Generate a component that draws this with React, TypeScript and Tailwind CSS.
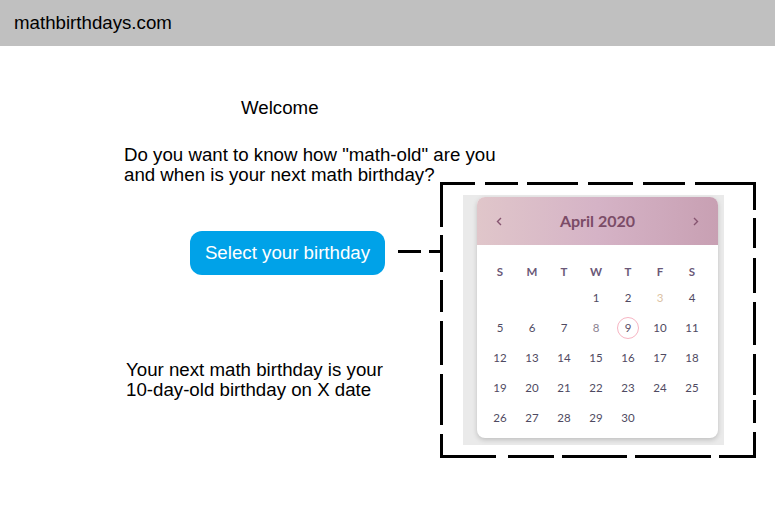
import React from "react";

const arial = { fontFamily: '"Liberation Sans", Arial, sans-serif' };
const lato = { fontFamily: 'Lato, "Open Sans", sans-serif' };

const topDashes: [number, number][] = [[0, 35], [45, 78], [87, 138], [148, 193], [203, 245], [255, 316]];
const rightDashes: [number, number][] = [[0, 28], [36, 66], [76, 111], [120, 163], [172, 213], [218, 241], [250, 276]];
const leftDashes: [number, number][] = [[0, 45], [53, 90], [98, 130], [139, 183], [192, 243], [252, 276]];
const bottomDashes: [number, number][] = [[0, 56], [68, 114], [122, 187], [195, 271], [279, 316]];

function DashedFrame() {
  return (
    <svg className="absolute inset-0 pointer-events-none" width="317" height="277" viewBox="0 0 317 277">
      {topDashes.map(([a, b], i) => (
        <rect key={"t" + i} x={a} y={0} width={b - a} height={3} fill="#000" />
      ))}
      {bottomDashes.map(([a, b], i) => (
        <rect key={"b" + i} x={a} y={273} width={b - a} height={3} fill="#000" />
      ))}
      {leftDashes.map(([a, b], i) => (
        <rect key={"l" + i} x={0} y={a} width={3} height={b - a} fill="#000" />
      ))}
      {rightDashes.map(([a, b], i) => (
        <rect key={"r" + i} x={313} y={a} width={3} height={b - a} fill="#000" />
      ))}
    </svg>
  );
}

const weekdays = ["S", "M", "T", "W", "T", "F", "S"];
const cells: (number | null)[] = [null, null, null, ...Array.from({ length: 30 }, (_, i) => i + 1)];

function Calendar() {
  return (
    <div className="w-[261px] h-[250px] bg-[#eaeaea] pl-[14px] pt-[2px]">
      <div
        className="w-[241px] h-[241px] bg-white rounded-[8px] overflow-hidden shadow-[0_2px_5px_rgba(0,0,0,0.18)]"
        style={lato}
      >
        <div className="h-[48px] bg-gradient-to-r from-[#e0c6ca] via-[#d5b3c6] to-[#c8a0b3] flex items-center justify-between px-[19px]">
          <svg width="6" height="9" viewBox="0 0 6 9">
            <polyline points="5,1 1.5,4.5 5,8" fill="none" stroke="#865470" strokeWidth="1.4" />
          </svg>
          <span className="text-[16px] font-bold text-[#7b4c67]">April 2020</span>
          <svg width="6" height="9" viewBox="0 0 6 9">
            <polyline points="1,1 4.5,4.5 1,8" fill="none" stroke="#865470" strokeWidth="1.4" />
          </svg>
        </div>
        <div className="px-[7px] pt-[16px]">
          <div className="grid grid-cols-[repeat(7,32px)] h-[22px] items-center">
            {weekdays.map((d, i) => (
              <div key={i} className="text-center text-[11.5px] font-bold text-[#6a5878]">
                {d}
              </div>
            ))}
          </div>
          <div className="grid grid-cols-[repeat(7,32px)] auto-rows-[30px]">
            {cells.map((n, i) => (
              <div key={i} className="flex items-center justify-center">
                {n !== null && (
                  n === 9 ? (
                    <span className="w-[22px] h-[22px] rounded-full border-[1.5px] border-[#f7b5c3] flex items-center justify-center text-[11.5px] text-[#5a5068]">
                      9
                    </span>
                  ) : (
                    <span
                      className={
                        "text-[11.5px] " +
                        (n === 3 ? "text-[#dcc3a3]" : n === 8 ? "text-[#8c8290]" : "text-[#4f4a62]")
                      }
                    >
                      {n}
                    </span>
                  )
                )}
              </div>
            ))}
          </div>
        </div>
      </div>
    </div>
  );
}

export default function App() {
  return (
    <div className="w-[775px] h-[511px] bg-white text-black overflow-hidden" style={arial}>
      <div className="h-[46px] bg-[#c0c0c0] flex items-center pl-[14px] text-[18.7px]">mathbirthdays.com</div>
      <div className="flex items-start">
        <div className="w-[440px] shrink-0 flex flex-col text-[18.7px] leading-[20px] whitespace-nowrap">
          <div className="mt-[52px] pl-[241px]">Welcome</div>
          <div className="mt-[27px] pl-[124px]">
            <div>Do you want to know how "math-old" are you</div>
            <div>and when is your next math birthday?</div>
          </div>
          <div className="mt-[46px] pl-[190px] flex items-center">
            <div className="w-[195px] h-[44px] rounded-[12px] bg-[#00a2e8] text-white flex items-center justify-center">
              Select your birthday
            </div>
            <svg className="ml-[13px] mt-[-3px]" width="42" height="3" viewBox="0 0 42 3">
              <rect x="0" y="0" width="23" height="3" fill="#000" />
              <rect x="31" y="0" width="11" height="3" fill="#000" />
            </svg>
          </div>
          <div className="mt-[85px] pl-[126px]">
            <div>Your next math birthday is your</div>
            <div>10-day-old birthday on X date</div>
          </div>
        </div>
        <div className="relative shrink-0 mt-[136px] w-[317px] h-[277px] pl-[23px] pt-[13px]">
          <Calendar />
          <DashedFrame />
        </div>
      </div>
    </div>
  );
}
